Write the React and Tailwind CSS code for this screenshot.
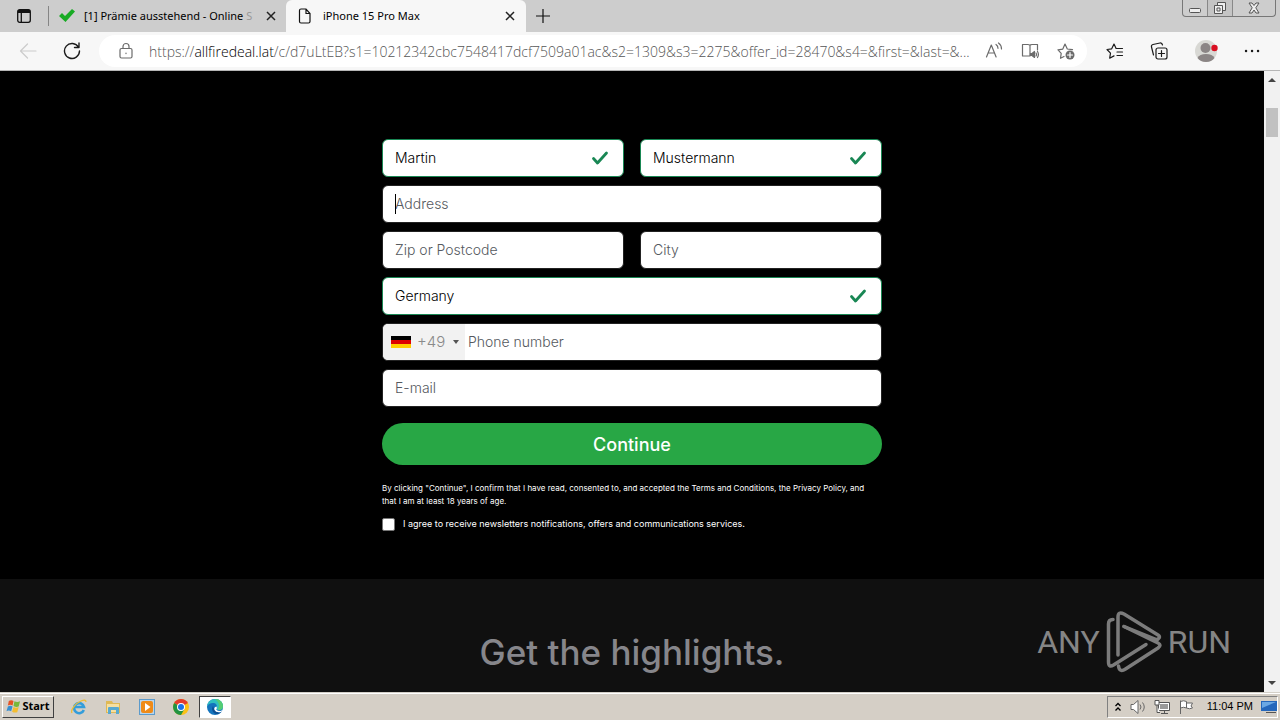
import { useState } from 'react';
import clsx from 'clsx';

const BASE_INPUT =
  'h-[38px] w-full appearance-none rounded-md border bg-white px-3 pb-0.5 text-[14px] font-light text-black outline-none placeholder:text-[#55595e] placeholder:opacity-100';

function CheckMark() {
  return (
    <svg viewBox="0 0 18 16" className="pointer-events-none absolute top-[11px] right-[15px] h-4 w-[18px]" fill="none">
      <path d="M2.5 8.5 6.5 13 15.5 3" stroke="#198754" strokeWidth="2.8" strokeLinecap="round" strokeLinejoin="round" />
    </svg>
  );
}

function Field({ label, value = '', type = 'text', caret = false }) {
  const [text, setText] = useState(value);
  const valid = text !== '';

  return (
    <div className="relative w-full">
      <input
        type={type}
        value={text}
        aria-label={label}
        placeholder={label}
        onChange={(e) => setText(e.target.value)}
        className={clsx(BASE_INPUT, valid ? 'border-[#198754]' : 'border-[#222222]')}
      />
      {caret && <span className="absolute top-[9px] left-[13px] h-5 w-px bg-black" />}
      {valid && <CheckMark />}
    </div>
  );
}

function Tab({ title, icon, active, className }) {
  return (
    <div className={clsx('flex min-w-0 items-center', active ? 'rounded-t-md bg-[#f7f7f7]' : 'bg-[#cdcdcd]', className)}>
      {icon}
      <span className="flex-1 whitespace-nowrap">{title}</span>
      <button type="button" aria-label="Close tab" className="p-1">
        <svg viewBox="0 0 10 10" className="size-[10px]" stroke="#222" strokeWidth="1.5">
          <path d="M1 1 9 9M9 1 1 9" />
        </svg>
      </button>
    </div>
  );
}

function TabStrip() {
  return (
    <header className="flex h-8 shrink-0 bg-[#cdcdcd] font-['Noto_Sans','Open_Sans',sans-serif] text-[11px] text-black">
      <button type="button" aria-label="Tab actions" className="flex w-12 items-center justify-center">
        <svg viewBox="0 0 14 14" className="size-[14px]" fill="none" stroke="#111" strokeWidth="1.3">
          <rect x=".7" y=".7" width="12.6" height="12.6" rx="2" />
          <path d="M1 2.5h12" strokeWidth="3" />
          <path d="M4.3 3v10" />
        </svg>
      </button>
      <span className="my-1.5 w-px bg-[#858585]" />
      <Tab
        className="w-[237px] pr-1.5 pl-2.5"
        title={
          <>
            [1] Prämie ausstehend - Online <span className="text-[#999999]">S</span>
          </>
        }
        icon={
          <svg viewBox="0 0 16 14" className="mr-[9px] h-[14px] w-4 shrink-0">
            <path d="M0 7 3 4l3 3 7-7 3 2.500L6.500 13Z" fill="#19ab25" />
          </svg>
        }
      />
      <Tab
        active
        className="w-[240px] pr-[7px] pl-3"
        title="iPhone 15 Pro Max"
        icon={
          <svg viewBox="0 0 14 16" className="mr-[11px] h-4 w-[14px] shrink-0" fill="none" stroke="#111" strokeWidth="1.2">
            <path d="M3 1h5l4 4.500V13.500q0 1.500-1.500 1.500H3q-1.500 0-1.500-1.500V2.500Q1.500 1 3 1ZM8 1v4.500h4" />
          </svg>
        }
      />
      <button type="button" aria-label="New tab" className="flex w-[34px] items-center justify-center">
        <svg viewBox="0 0 14 14" className="size-[14px]" stroke="#111" strokeWidth="1.2">
          <path d="M7 0v14M0 7h14" />
        </svg>
      </button>
      <div className="mr-1 ml-auto flex h-[17px] overflow-hidden rounded-b border border-t-0 border-[#777777]">
        <button type="button" aria-label="Minimize" className="flex w-[25px] items-center justify-center border-r border-[#888888]">
          <svg viewBox="0 0 12 12" className="size-3" fill="#eee" stroke="#555">
            <rect x=".5" y="6.500" width="11" height="4" rx="1" />
          </svg>
        </button>
        <button type="button" aria-label="Restore" className="flex w-[25px] items-center justify-center border-r border-[#888888] bg-[#c4c4c4]">
          <svg viewBox="0 0 14 14" className="size-[14px]" fill="#eee" stroke="#555">
            <path d="M4.500 1.500h8v8h-8z" />
            <path d="M1.500 4.500h8v8h-8zM4 7h3v3H4z" />
          </svg>
        </button>
        <button type="button" aria-label="Close" className="flex w-[42px] items-center justify-center">
          <svg viewBox="0 0 12 12" className="size-3" fill="#eee" stroke="#555">
            <path d="M1 1h3l2 2.500L8 1h3L7.800 5.800 11 11H8L6 8l-2 3H1l3.200-5.200Z" />
          </svg>
        </button>
      </div>
    </header>
  );
}

function ToolButton({ label, children, className }) {
  return (
    <button type="button" aria-label={label} className={clsx('flex shrink-0 items-center justify-center', className)}>
      <svg viewBox="0 0 18 18" className="size-[18px]" fill="none" stroke="currentColor" strokeWidth="1.2" strokeLinecap="round" strokeLinejoin="round">
        {children}
      </svg>
    </button>
  );
}

function Toolbar() {
  return (
    <nav className="flex h-[39px] shrink-0 items-center border-b border-[#b5b5b5] bg-[#f7f7f7] pr-[19px] text-[#1b1b1b]">
      <ToolButton label="Back" className="ml-[19px] text-[#cccccc]">
        <path d="M17 9H1.500M8.500 2 1.500 9l7 7" />
      </ToolButton>
      <ToolButton label="Refresh" className="ml-[26px]">
        <path d="M15.500 5.200A7.500 7.500 0 1 0 16.500 9M16 1v4.500h-4.500" strokeWidth="1.400" />
      </ToolButton>
      <div className="ml-[18px] flex h-8 min-w-0 flex-1 items-center rounded-full bg-white pr-3 pl-[18px] text-[#6b6b6b]">
        <ToolButton label="Site information">
          <rect x="3" y="6.500" width="12" height="9.500" rx="1.500" />
          <path d="M6 6.500V4.500a3 3 0 0 1 6 0v2M9 11v.6" />
        </ToolButton>
        <div
          role="textbox"
          aria-label="Address bar"
          className="ml-[14px] min-w-0 flex-1 font-['Open_Sans','Noto_Sans',sans-serif] text-[14px] font-light whitespace-nowrap text-[#555555]"
        >
          https://<span className="text-black">allfiredeal.lat</span>
          /c/d7uLtEB?s1=10212342cbc7548417dcf7509a01ac&amp;s2=1309&amp;s3=2275&amp;offer_id=28470&amp;s4=&amp;first=&amp;last=&amp;...
        </div>
        <ToolButton label="Read aloud">
          <path d="M1.500 15 6.300 3l4.800 12M3 11h6.500M11 2.500q2 1.300 2 3.800M13.500 1q3 2 3 6" />
        </ToolButton>
        <ToolButton label="Immersive reader" className="ml-[18px]">
          <path d="M9 3v11H1.500V2.500H7q2 0 2 1 0-1 2-1h5.500V8M9 3.500V14" />
          <path d="M9.500 11.500h1.500l2.500-2v6l-2.500-2H9.500Z" fill="currentColor" />
          <path d="M15 11q1 1.500 0 3M16.500 9.500q1.800 3 0 6" />
        </ToolButton>
        <ToolButton label="Add to favorites" className="ml-[18px]">
          <path d="m7 14.500-3.500 1.800.7-5L1 7.800l4.800-.7L8 2l2.300 5 5.200.7" />
          <circle cx="13" cy="13" r="4.500" fill="currentColor" stroke="none" />
          <path d="M13 10.500v5M10.500 13h5" stroke="#fff" />
        </ToolButton>
      </div>
      <ToolButton label="Favorites" className="ml-[19px]">
        <path d="M10 6.200 8 2 5.700 6.800 1 7.500l3.500 3.700-.8 5 4.300-2.300M10 6.500h6.500M11 10h5.500M11 13.500h5.500" />
      </ToolButton>
      <ToolButton label="Collections" className="ml-[26px]">
        <rect x="6" y="6" width="11" height="11" rx="2" />
        <path d="M11.500 8.500v6M8.500 11.500h6M3.500 13 1.500 5Q1 3 3 2.500L10 1q2-.3 2.500 2" />
      </ToolButton>
      <button type="button" aria-label="Profile" className="ml-[26px] shrink-0">
        <svg viewBox="0 0 24 24" className="size-6">
          <circle cx="12" cy="12" r="11" fill="#d8d8d4" />
          <circle cx="11.500" cy="9" r="5" fill="#8b8585" />
          <path d="M3.500 19q2-4 8.500-4t8.500 4q-3 4-8.500 4t-8.500-4Z" fill="#8b8585" />
          <circle cx="20.500" cy="9" r="3.200" fill="#d91022" />
        </svg>
      </button>
      <ToolButton label="Settings and more" className="ml-[25px]">
        <path d="M3 9h.1M9 9h.1M15 9h.1" strokeWidth="2.400" />
      </ToolButton>
    </nav>
  );
}

function SignupForm() {
  return (
    <form className="mx-auto w-full max-w-[500px]" onSubmit={(e) => e.preventDefault()}>
      <div className="grid gap-2">
        <div className="grid grid-cols-2 gap-4">
          <Field label="First name" value="Martin" />
          <Field label="Last name" value="Mustermann" />
        </div>
        <Field label="Address" caret />
        <div className="grid grid-cols-2 gap-4">
          <Field label="Zip or Postcode" />
          <Field label="City" />
        </div>
        <div className="relative">
          <select aria-label="Country" className={clsx(BASE_INPUT, 'border-[#198754]')}>
            <option>Germany</option>
          </select>
          <CheckMark />
        </div>
        <div className="flex h-[38px] overflow-hidden rounded-md border border-[#222222] bg-white text-[14px] font-light">
          <button type="button" aria-label="Country code" className="flex w-[82px] shrink-0 items-center bg-[#f2f2f2] pl-2 text-[15px] text-[#8a8a8a]">
            <span className="flex h-3 w-5 flex-col">
              <span className="flex-1 bg-black" />
              <span className="flex-1 bg-[#dd0000]" />
              <span className="flex-1 bg-[#ffce00]" />
            </span>
            <span className="ml-1.5">+49</span>
            <span className="ml-2 border-x-[3px] border-t-4 border-x-transparent border-t-[#555555]" />
          </button>
          <input
            type="tel"
            aria-label="Phone number"
            placeholder="Phone number"
            className="min-w-0 flex-1 px-[3px] pb-0.5 text-black outline-none placeholder:text-[#55595e]"
          />
        </div>
        <Field label="E-mail" type="email" />
      </div>
      <button type="submit" className="mt-4 h-[42px] w-full rounded-full bg-[#28a745] text-[18px] font-medium text-white">
        Continue
      </button>
      <p className="mt-[17px] pr-2 text-[8px] leading-[13px]">
        By clicking &quot;Continue&quot;, I confirm that I have read, consented to, and accepted the Terms and Conditions, the Privacy
        Policy, and that I am at least 18 years of age.
      </p>
      <label className="mt-2 flex h-4 items-center gap-2 text-[9px]">
        <input type="checkbox" className="size-[13px] appearance-none rounded-xs border border-[#767676] bg-white checked:bg-[#28a745]" />
        I agree to receive newsletters notifications, offers and communications services.
      </label>
    </form>
  );
}

function Watermark() {
  return (
    <div className="absolute right-[33px] bottom-[19px] flex items-center font-[Roboto,sans-serif] text-[32px] leading-none text-[#858585]">
      ANY
      <svg viewBox="0 0 56 62" className="mx-1.5 h-[62px] w-14" fill="none" stroke="#7c7c7c" strokeWidth="3.500" strokeLinecap="round" strokeLinejoin="round">
        <path d="M7 8.500Q2.500 8.500 2.500 13v38q0 6 5 3L40 33.500" />
        <path d="M12 44V6q0-6 6-3l34 21q3 2 0 4-1 1.500-3 0L18 15.500" />
        <path d="M12.500 55q1 7 7 3L52 37q4-3 0-5L18 15.500" />
      </svg>
      RUN
    </div>
  );
}

function Scrollbar() {
  return (
    <div className="flex w-4 shrink-0 flex-col items-center bg-[#f1f1f1] py-[7px]">
      <span className="border-x-4 border-b-4 border-x-transparent border-b-[#444444]" />
      <span className="mt-[26px] h-[29px] w-3 bg-[#c1c1c1]" />
      <span className="mt-auto border-x-4 border-t-4 border-x-transparent border-t-[#444444]" />
    </div>
  );
}

function ChromeIcon() {
  return (
    <svg viewBox="0 0 16 16" className="size-4">
      <circle cx="8" cy="8" r="8" fill="#fbc116" />
      <path d="M8 8 1.100 4A8 8 0 0 1 14.900 4Z" fill="#e33b2e" />
      <path d="M8 8 1.100 4A8 8 0 0 0 8 16l3.500-6Z" fill="#229342" />
      <circle cx="8" cy="8" r="4" fill="#fff" />
      <circle cx="8" cy="8" r="3" fill="#1a73e8" />
    </svg>
  );
}

function EdgeIcon() {
  return (
    <svg viewBox="0 0 16 16" className="size-4">
      <circle cx="8" cy="8" r="8" fill="#1474bd" />
      <path d="M0 7.500C.5 3 4 0 8 0c5 0 8 3.500 8 7 0 3-2 4-4 4-2.500 0-3-1-2.500-2C11 6 8.500 4 6 4 3 4 1 5.500 0 7.500Z" fill="#2fc0c0" />
      <path d="M8 0c5 0 8 3.500 8 7 0 3-2 4-4 4l-1-1c2-3 1-7-3-10Z" fill="#55cd74" />
      <path d="M6 7c-2 3-.5 7 3 8 2 .3 4-.5 5.500-2-3 1-7 0-8.500-6Z" fill="#0b4f93" />
      <path d="M9.500 7.500q1 2-.3 3 1 1.500 4.300 1.500L15.500 11 14 13Q9 14 7.500 11 6.500 8 9.500 7.500Z" fill="#fff" />
    </svg>
  );
}

function Taskbar() {
  return (
    <footer className="flex h-7 shrink-0 items-center border-t border-[#d4d0c8] bg-[#d5cfc6] pl-0.5 font-['Liberation_Sans',sans-serif] text-black shadow-[inset_0_1px_0_#ffffff]">
      <button
        type="button"
        className="flex h-[22px] w-[52px] items-center justify-center gap-px border border-t-white border-r-[#404040] border-b-[#404040] border-l-white font-['Open_Sans','DejaVu_Sans',sans-serif] text-[11px] font-bold"
      >
        <svg viewBox="0 0 16 16" className="size-[15px] shrink-0">
          <path d="M3 2q2.500-1.500 5 0L7 7Q4.500 5.500 2 7Z" fill="#e65324" />
          <path d="M9 2.500q3 1.500 6 0L13.500 8Q11 9 8 7.500Z" fill="#78b83b" />
          <path d="M2 8q2.500-1.500 5 0l-1.500 5Q3 11.500.500 13Z" fill="#388fd1" />
          <path d="M8 8.500q2.500 1.500 5.500 0L12 14q-3 1-5.500-.500Z" fill="#f4bd30" />
        </svg>
        Start
      </button>
      <div className="ml-[17px] flex gap-[18px]">
        <button type="button" aria-label="Internet Explorer">
          <svg viewBox="0 0 16 16" className="size-4" fill="none">
            <path d="M12.800 11A5 5 0 1 1 13 8H4" stroke="#339dda" strokeWidth="2.600" />
            <path d="M1 14C-1 11 5 4 10 2q5-2 5 1" stroke="#ecbd36" strokeWidth="1.300" />
          </svg>
        </button>
        <button type="button" aria-label="Explorer">
          <svg viewBox="0 0 16 16" className="size-4">
            <path d="M1 2h6l1 2h7v10H1Z" fill="#dfb956" />
            <path d="M2 5h12v8H2Z" fill="#f6dfa0" />
            <path d="M3 15V9q0-1 1-1h9q1 0 1 1v6h-3v-4H6v4Z" fill="#58a9d0" />
          </svg>
        </button>
        <button type="button" aria-label="Media Player">
          <svg viewBox="0 0 16 16" className="size-4">
            <rect x=".5" y=".5" width="15" height="15" fill="#b9d5ec" stroke="#5c9bcb" />
            <rect x="2" y="2" width="12" height="12" rx="2" fill="#ef8b18" />
            <path d="m6 4 5.500 4L6 12Z" fill="#fff" />
          </svg>
        </button>
        <button type="button" aria-label="Chrome">
          <ChromeIcon />
        </button>
      </div>
      <button
        type="button"
        aria-label="Edge"
        className="ml-2.5 flex h-[22px] w-8 items-center justify-center border border-t-[#404040] border-r-white border-b-white border-l-[#404040] bg-white"
      >
        <EdgeIcon />
      </button>
      <div className="mr-0.5 ml-auto flex h-[22px] items-center border border-t-[#808080] border-r-white border-b-white border-l-[#808080] pl-1.5 text-[11px]">
        <svg viewBox="0 0 8 10" className="h-2.5 w-2" fill="none" stroke="#000" strokeWidth="1.300">
          <path d="m1.500 4 2.500-2.500L6.500 4M1.500 8.500 4 6l2.500 2.500" />
        </svg>
        <svg viewBox="0 0 16 16" className="ml-2 size-4" fill="#fff" stroke="#666">
          <path d="M1 5.500h2.500L8 1.500v13l-4.500-4H1Z" />
          <path d="M10 5.500q2 2.500 0 5M12.500 3.500q3.500 4.500 0 9" fill="none" />
        </svg>
        <svg viewBox="0 0 16 16" className="ml-2 size-4" fill="#fff" stroke="#555">
          <path d="M4.500 3.500h11v8h-11zM7 14.500h7M10.500 12v2" />
          <path d="M6 5h8v5H6z" fill="#999" stroke="none" />
          <path d="M1 1.500h4V6H1zM3 6v7.500h3" />
        </svg>
        <svg viewBox="0 0 16 16" className="ml-2 size-4" fill="#fff" stroke="#666">
          <path d="M2.500 15V1.500M2.500 2.500q3-1.500 6 0V9q-3-1.500-6 0M8.500 4h6l-1.500 3 1.500 2q-3 1.500-6 0" />
        </svg>
        <span className="ml-[13px] whitespace-nowrap">11:04 PM</span>
        <svg viewBox="0 0 16 14" className="ml-2 h-[14px] w-4">
          <path d="M0 1h16v10H0Z" fill="#2567bb" />
          <path d="M1 2h14L1 8Z" fill="#6ba8e4" />
          <path d="M5 12h10v1H5Z" fill="#555" />
        </svg>
      </div>
    </footer>
  );
}

export default function App() {
  return (
    <div className="flex h-screen flex-col overflow-hidden">
      <TabStrip />
      <Toolbar />
      <div className="flex min-h-0 flex-1">
        <main className="relative flex min-w-0 flex-1 flex-col overflow-hidden bg-black font-[Inter,sans-serif] text-white">
          <section className="shrink-0 px-4 pt-[68px] pb-[47px]">
            <SignupForm />
          </section>
          <section className="flex-1 bg-[#101010] pt-12 text-center">
            <h2 className="text-[35px] leading-[50px] font-medium text-[#86868b]">Get the highlights.</h2>
          </section>
          <Watermark />
        </main>
        <Scrollbar />
      </div>
      <Taskbar />
    </div>
  );
}
